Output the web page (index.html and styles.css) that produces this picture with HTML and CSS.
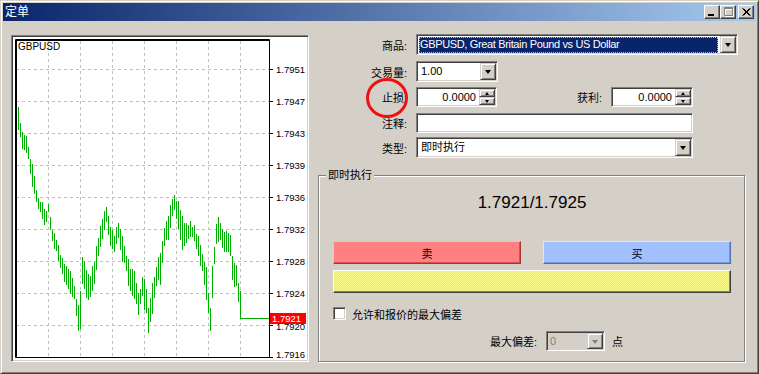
FILE: index.html
```html
<!DOCTYPE html>
<html lang="zh">
<head>
<meta charset="utf-8">
<title>定单</title>
<link rel="stylesheet" href="styles.css">
</head>
<body>
<div class="window">
  <div class="titlebar">
    <span class="title">定单</span>
    <div class="caption-btns">
      <span class="cbtn"><svg width="14" height="12" viewBox="0 0 14 12"><rect x="3" y="8" width="6" height="2" fill="#000"/></svg></span>
      <span class="cbtn"><svg width="14" height="12" viewBox="0 0 14 12"><path d="M4 2.5H12.5V10.5H4.5V2.5M4.5 3.5H12" stroke="#fff" fill="none"/><path d="M3.5 1.5H11.5V9.5H3.5ZM3.5 2.5H11.5" stroke="#808080" fill="none"/></svg></span>
      <span class="cbtn close"><svg width="14" height="12" viewBox="0 0 14 12"><path d="M3.5 2.5L10.5 9.5M4.5 2.5L11.5 9.5M10.5 2.5L3.5 9.5M11.5 2.5L4.5 9.5" stroke="#000" stroke-width="1" fill="none"/></svg></span>
    </div>
  </div>
  <div class="body">
    <div class="chart-panel">
      <svg id="chart" class="chart" width="294" height="323" viewBox="13 37 294 323">
        <g class="grid" stroke="#c0c0c0" stroke-dasharray="3 3" fill="none">
          <path d="M16 69.5H269M16 101.5H269M16 133.5H269M16 165.5H269M16 197.5H269M16 229.5H269M16 261.5H269M16 293.5H269M16 325.5H269"/>
          <path d="M48.5 41V357M80.5 41V357M112.5 41V357M144.5 41V357M176.5 41V357M208.5 41V357M240.5 41V357"/>
        </g>
        <g id="bars" stroke="#00b000" fill="none"></g>
        <path d="M240 318.5H269" stroke="#00b000" fill="none"/>
        <path d="M15.5 39.5H269.5V357.5H15.5Z" stroke="#000" fill="none"/>
        <path d="M15.5 40.5H269M16.5 40V357" stroke="#000" fill="none"/>
        <path d="M269 69.5H273M269 101.5H273M269 133.5H273M269 165.5H273M269 197.5H273M269 229.5H273M269 261.5H273M269 293.5H273M269 325.5H273M269 357.5H273" stroke="#000"/>
        <g class="axis-text">
          <text x="276" y="73">1.7951</text>
          <text x="276" y="105">1.7947</text>
          <text x="276" y="137">1.7943</text>
          <text x="276" y="169">1.7939</text>
          <text x="276" y="201">1.7936</text>
          <text x="276" y="233">1.7932</text>
          <text x="276" y="265">1.7928</text>
          <text x="276" y="297">1.7924</text>
          <text x="276" y="330">1.7920</text>
          <text x="276" y="358">1.7916</text>
        </g>
        <rect x="270" y="313" width="36" height="11" fill="#ff0000"/>
        <text class="axis-text current" x="272" y="322">1.7921</text>
        <text class="symbol-text" x="18" y="50">GBPUSD</text>
      </svg>
    </div>
    <div class="form">
      <div class="row h21">
        <span class="lbl">商品:</span>
        <div class="field combo w-symbol">
          <span class="sel">GBPUSD, Great Britain Pound vs US Dollar</span>
          <span class="drop"><i class="tri"></i></span>
        </div>
      </div>
      <div class="row h21 gap6">
        <span class="lbl">交易量:</span>
        <div class="field combo w-vol">
          <span class="val">1.00</span>
          <span class="drop"><i class="tri"></i></span>
        </div>
      </div>
      <div class="row h20 gap5">
        <span class="lbl">止损:</span>
        <div class="field spin w-spin1">
          <span class="num">0.0000</span>
          <span class="spin-btns"><span class="sbtn"><i class="tri-up"></i></span><span class="sbtn"><i class="tri-sm"></i></span></span>
        </div>
        <span class="lbl lbl-tp">获利:</span>
        <div class="field spin w-spin2">
          <span class="num">0.0000</span>
          <span class="spin-btns"><span class="sbtn"><i class="tri-up"></i></span><span class="sbtn"><i class="tri-sm"></i></span></span>
        </div>
      </div>
      <div class="row h20 gap6">
        <span class="lbl">注释:</span>
        <div class="field edit w-long"></div>
      </div>
      <div class="row h21 gap4">
        <span class="lbl">类型:</span>
        <div class="field combo w-long">
          <span class="val">即时执行</span>
          <span class="drop"><i class="tri"></i></span>
        </div>
      </div>
      <div class="group">
        <span class="group-caption">即时执行</span>
        <div class="price">1.7921/1.7925</div>
        <div class="trade-btns">
          <span class="tbtn sell">卖</span>
          <span class="tbtn buy">买</span>
        </div>
        <div class="quote-bar"></div>
        <div class="check-row">
          <span class="checkbox"></span>
          <span class="check-label">允许和报价的最大偏差</span>
        </div>
        <div class="dev-row">
          <span class="dev-lbl">最大偏差:</span>
          <div class="field combo disabled w-dev">
            <span class="val">0</span>
            <span class="drop"><i class="tri tri-dis"></i></span>
          </div>
          <span class="unit">点</span>
        </div>
      </div>
    </div>
  </div>
  <svg class="mark" width="46" height="44" viewBox="0 0 46 44"><ellipse cx="22" cy="21" rx="19.5" ry="18.5" stroke="#ee1111" stroke-width="3" fill="none"/></svg>
</div>
<script src="script.js"></script>
</body>
</html>
```

FILE: styles.css
```css
* { box-sizing: border-box; }
body {
  margin: 0;
  font-family: "Liberation Sans", "Noto Sans CJK SC", sans-serif;
  font-size: 11px;
  color: #000;
  background: #d4d0c8;
}
.window {
  position: relative;
  width: 759px;
  height: 374px;
  background: #d4d0c8;
  border: 1px solid;
  border-color: #d4d0c8 #404040 #404040 #d4d0c8;
  box-shadow: inset 1px 1px #fff, inset -1px -1px #808080;
  padding: 2px;
  display: flex;
  flex-direction: column;
}
.titlebar {
  height: 18px;
  flex: none;
  display: flex;
  align-items: center;
  background: linear-gradient(to right, #0a246a, #a6caf0);
  color: #fff;
  padding: 0 2px 0 2px;
}
.title {
  font-size: 12px;
  line-height: 18px;
  letter-spacing: 0;
}
.caption-btns {
  margin-left: auto;
  display: flex;
  gap: 0;
}
.cbtn {
  width: 16px;
  height: 14px;
  background: #d4d0c8;
  border: 1px solid;
  border-color: #fff #404040 #404040 #fff;
  box-shadow: inset -1px -1px #808080;
  display: block;
}
.cbtn svg { display: block; }
.cbtn.close { margin-left: 2px; }

.body {
  flex: 1;
  display: flex;
  align-items: flex-start;
}
.chart-panel {
  margin: 14px 0 0 8px;
  width: 298px;
  height: 327px;
  border: 1px solid;
  border-color: #808080 #fff #fff #808080;
  box-shadow: inset 1px 1px #404040, inset -1px -1px #d4d0c8;
  background: #fff;
  padding: 1px;
}
.chart { display: block; }
.axis-text {
  font-family: "Liberation Sans", sans-serif;
  font-size: 9.5px;
  fill: #000;
}
.axis-text.current { fill: #fff; }
.symbol-text {
  font-family: "Liberation Sans", sans-serif;
  font-size: 10px;
  fill: #000;
}

.form {
  flex: 1;
  padding-top: 13px;
  display: flex;
  flex-direction: column;
}
.row {
  display: flex;
  align-items: center;
}
.h21 { height: 21px; }
.h20 { height: 20px; }
.gap6 { margin-top: 6px; }
.gap5 { margin-top: 5px; }
.gap4 { margin-top: 4px; }
.lbl {
  width: 98px;
  text-align: right;
  margin-right: 9px;
  white-space: nowrap;
}
.lbl-tp {
  width: 105px;
}
.field {
  height: 100%;
  background: #fff;
  border: 1px solid;
  border-color: #808080 #fff #fff #808080;
  box-shadow: inset 1px 1px #404040, inset -1px -1px #d4d0c8;
  padding: 1px;
  display: flex;
  align-items: stretch;
}
.w-symbol { width: 322px; }
.w-vol { width: 82px; }
.w-spin1 { width: 81px; }
.w-spin2 { width: 82px; }
.w-long { width: 277px; }
.w-dev { width: 59px; }
.combo .val {
  flex: 1;
  padding-left: 3px;
  line-height: 17px;
  white-space: nowrap;
  overflow: hidden;
}
.combo .sel {
  flex: 1;
  background: #0a246a;
  color: #fff;
  margin: 1px 2px 0 1px;
  padding-left: 1px;
  line-height: 15px;
  outline: 1px dotted #c8c0a0;
  outline-offset: -1px;
  white-space: nowrap;
  overflow: hidden;
  letter-spacing: -0.35px;
}
.drop {
  width: 16px;
  flex: none;
  background: #d4d0c8;
  border: 1px solid;
  border-color: #d4d0c8 #404040 #404040 #d4d0c8;
  box-shadow: inset 1px 1px #fff, inset -1px -1px #808080;
  display: flex;
  align-items: center;
  justify-content: center;
}
.tri {
  width: 0;
  height: 0;
  border-left: 3.5px solid transparent;
  border-right: 3.5px solid transparent;
  border-top: 4px solid #000;
  margin-top: 1px;
}
.tri-dis { border-top-color: #808080; }
.spin .num {
  flex: 1;
  text-align: right;
  padding-right: 3px;
  line-height: 16px;
}
.spin-btns {
  width: 16px;
  flex: none;
  display: flex;
  flex-direction: column;
}
.sbtn {
  flex: 1;
  background: #d4d0c8;
  border: 1px solid;
  border-color: #d4d0c8 #404040 #404040 #d4d0c8;
  box-shadow: inset 1px 1px #fff, inset -1px -1px #808080;
  display: flex;
  align-items: center;
  justify-content: center;
}
.tri-up {
  width: 0;
  height: 0;
  border-left: 2.5px solid transparent;
  border-right: 2.5px solid transparent;
  border-bottom: 3px solid #000;
}
.tri-sm {
  width: 0;
  height: 0;
  border-left: 2.5px solid transparent;
  border-right: 2.5px solid transparent;
  border-top: 3px solid #000;
}

.group {
  position: relative;
  margin: 17px 0 0 9px;
  width: 427px;
  height: 187px;
  border: 1px solid #808080;
  box-shadow: 1px 1px 0 #fff, inset 1px 1px 0 #fff;
  padding: 0 13px 0 14px;
}
.group-caption {
  position: absolute;
  top: -8px;
  left: 7px;
  padding: 0 2px;
  background: #d4d0c8;
  line-height: 14px;
}
.price {
  margin-top: 17px;
  height: 20px;
  line-height: 20px;
  text-align: center;
  font-size: 17px;
}
.trade-btns {
  margin-top: 28px;
  display: flex;
  gap: 22px;
}
.tbtn {
  width: 188px;
  height: 23px;
  display: flex;
  align-items: center;
  justify-content: center;
  border: 1px solid;
}
.sell {
  background: #ff8080;
  border-color: #ffb8b8 #b03030 #b03030 #ffb8b8;
  box-shadow: inset -1px -1px #d85050;
}
.buy {
  background: #a0c0ff;
  border-color: #d8e8ff #5070b0 #5070b0 #d8e8ff;
  box-shadow: inset -1px -1px #7898d8;
}
.quote-bar {
  margin-top: 6px;
  height: 23px;
  border: 1px solid;
  border-color: #fff #404040 #404040 #fff;
  box-shadow: inset -1px -1px #808080;
  background: repeating-conic-gradient(#fcfc8c 0 25%, #e0dcb4 0 50%) 0 0 / 2px 2px;
}
.check-row {
  margin-top: 14px;
  display: flex;
  align-items: center;
  height: 13px;
}
.checkbox {
  width: 13px;
  height: 13px;
  background: #fff;
  border: 1px solid;
  border-color: #808080 #fff #fff #808080;
  box-shadow: inset 1px 1px #404040, inset -1px -1px #d4d0c8;
}
.check-label { margin-left: 6px; }
.dev-row {
  margin-top: 11px;
  height: 20px;
  display: flex;
  align-items: center;
}
.dev-lbl {
  width: 204px;
  text-align: right;
  margin-right: 9px;
}
.combo.disabled { background: #d4d0c8; }
.combo.disabled .val { color: #808080; padding-left: 2px; }
.unit { margin-left: 7px; }

.mark {
  position: absolute;
  left: 364px;
  top: 76px;
}
```

FILE: script.js
```js
(function () {
  var kp = [
    [16, 97, 106], [18, 100, 130], [20, 123, 137], [23, 130, 160], [25, 129, 150],
    [28, 146, 162], [32, 162, 187], [36, 187, 203], [38, 195, 210], [42, 200, 222],
    [45, 210, 228], [48, 200, 215], [52, 225, 245], [56, 237, 253], [60, 250, 270],
    [64, 260, 285], [70, 270, 298], [74, 285, 302], [78, 300, 335], [80, 290, 330],
    [82, 252, 285], [86, 268, 300], [90, 270, 302], [94, 255, 285], [98, 230, 265],
    [102, 215, 240], [106, 203, 225], [110, 225, 250], [114, 233, 252], [118, 220, 240],
    [122, 230, 262], [126, 250, 275], [130, 262, 300], [134, 270, 300], [138, 293, 318],
    [142, 275, 300], [146, 280, 320], [148, 300, 335], [152, 280, 317], [156, 260, 290],
    [160, 243, 287], [164, 225, 250], [168, 210, 240], [172, 198, 220], [174, 195, 215],
    [178, 200, 230], [182, 215, 252], [186, 220, 245], [190, 220, 237], [194, 225, 245],
    [198, 233, 260], [202, 250, 275], [206, 260, 300], [208, 285, 320], [210, 300, 335],
    [212, 260, 300], [214, 243, 270], [216, 220, 250], [219, 212, 240], [222, 225, 253],
    [226, 227, 253], [230, 235, 260], [233, 255, 293], [236, 265, 293], [238, 277, 308],
    [240, 290, 318]
  ];
  function at(x) {
    for (var i = 0; i < kp.length - 1; i++) {
      var a = kp[i], b = kp[i + 1];
      if (x >= a[0] && x <= b[0]) {
        var t = (x - a[0]) / (b[0] - a[0]);
        return [a[1] + (b[1] - a[1]) * t, a[2] + (b[2] - a[2]) * t];
      }
    }
    var l = kp[kp.length - 1];
    return [l[1], l[2]];
  }
  var seed = 12345;
  function rnd() {
    seed = (seed * 16807) % 2147483647;
    return seed / 2147483647;
  }
  var d = "";
  for (var x = 16; x <= 240; x += 2) {
    var r = at(x);
    var range = r[1] - r[0];
    var top = Math.round(r[0] + rnd() * range * 0.25);
    var bot = Math.round(r[1] - rnd() * range * 0.25);
    if (bot - top < 8) { bot = top + 8; }
    if (x === 16) { top = 97; bot = 106; }
    if (x === 240) { bot = 318; }
    d += "M" + (x + 0.5) + " " + top + "V" + bot;
  }
  var g = document.getElementById("bars");
  var p = document.createElementNS("http://www.w3.org/2000/svg", "path");
  p.setAttribute("d", d);
  g.appendChild(p);
})();
```
